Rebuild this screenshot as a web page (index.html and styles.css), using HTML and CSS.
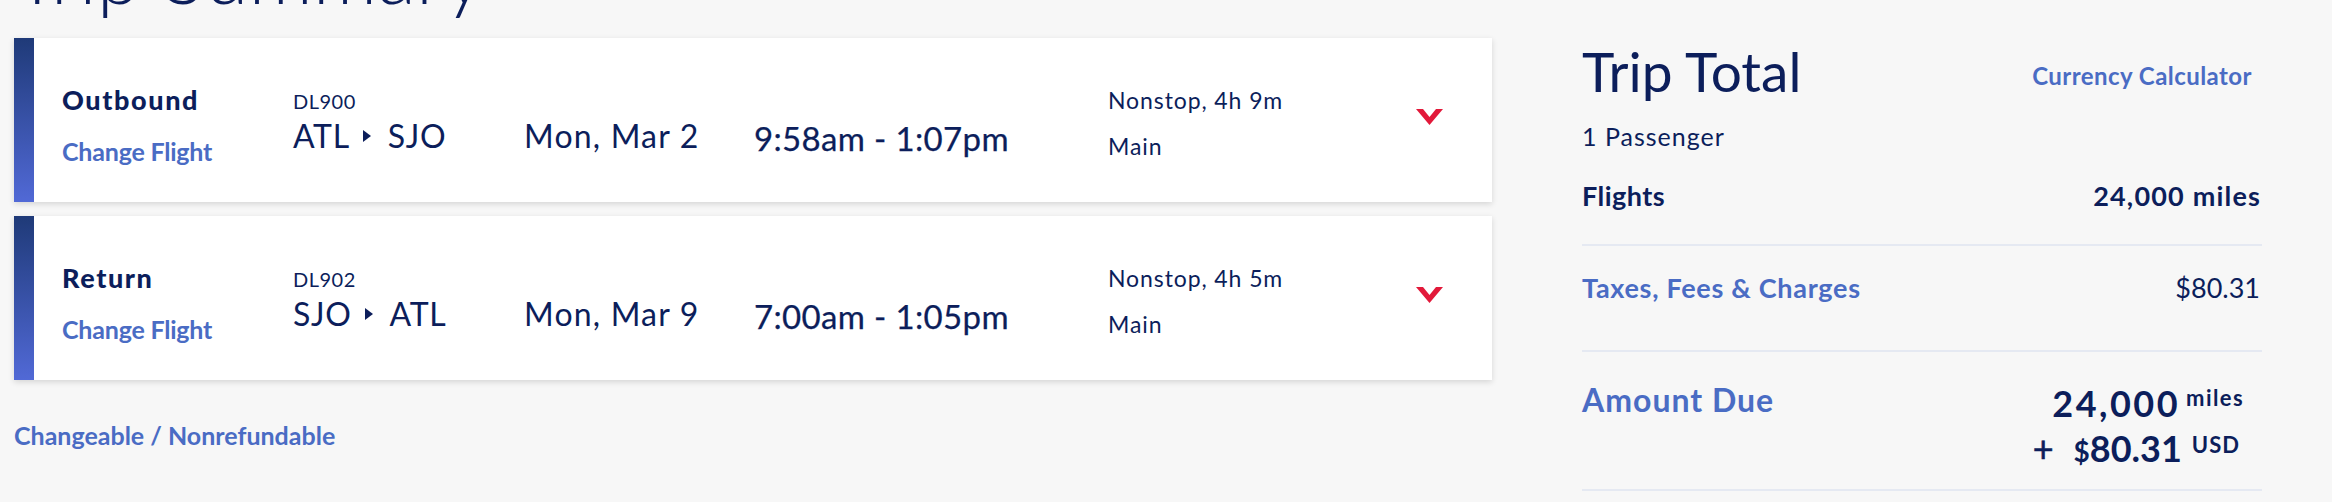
FILE: index.html
```html
<!DOCTYPE html>
<html lang="en">
<head>
<meta charset="utf-8">
<title>Trip Summary</title>
<link rel="stylesheet" href="styles.css">
</head>
<body>
<div class="page">
  <main class="trip">
    <h1 class="title">Trip Summary</h1>

    <section class="card">
      <div class="bar"></div>
      <div class="cols">
        <div class="label">
          <div class="dir">Outbound</div>
          <a class="change" href="#">Change Flight</a>
        </div>
        <div class="flight">
          <div class="fno">DL900</div>
          <div class="route"><span>ATL</span><span class="tri"></span><span>SJO</span></div>
        </div>
        <div class="date">Mon, Mar 2</div>
        <div class="time">9:58am - 1:07pm</div>
        <div class="info">
          <div>Nonstop, 4h 9m</div>
          <div>Main</div>
        </div>
        <div class="chev">
          <svg width="27" height="16" viewBox="0 0 27 16"><polygon points="0,0 7,0 13.5,8 20,0 27,0 13.5,16" fill="#e2193a"/></svg>
        </div>
      </div>
    </section>

    <section class="card">
      <div class="bar"></div>
      <div class="cols">
        <div class="label">
          <div class="dir">Return</div>
          <a class="change" href="#">Change Flight</a>
        </div>
        <div class="flight">
          <div class="fno">DL902</div>
          <div class="route"><span>SJO</span><span class="tri"></span><span>ATL</span></div>
        </div>
        <div class="date">Mon, Mar 9</div>
        <div class="time">7:00am - 1:05pm</div>
        <div class="info">
          <div>Nonstop, 4h 5m</div>
          <div>Main</div>
        </div>
        <div class="chev">
          <svg width="27" height="16" viewBox="0 0 27 16"><polygon points="0,0 7,0 13.5,8 20,0 27,0 13.5,16" fill="#e2193a"/></svg>
        </div>
      </div>
    </section>

    <a class="fare-link" href="#">Changeable / Nonrefundable</a>
  </main>

  <aside class="total">
    <div class="tt-head">
      <h2 class="tt-title">Trip Total</h2>
      <a class="calc" href="#">Currency Calculator</a>
    </div>
    <div class="pax">1 Passenger</div>
    <div class="row row-flights">
      <span>Flights</span>
      <span class="miles-val">24,000 miles</span>
    </div>
    <div class="row row-taxes">
      <a class="taxes" href="#">Taxes, Fees &amp; Charges</a>
      <span>$80.31</span>
    </div>
    <div class="row row-due">
      <div class="due-label">Amount Due</div>
      <div class="due-amt">
        <div class="amt-line"><span class="big-miles">24,000</span><span class="sup sup-miles">miles</span></div>
        <div class="amt-line"><span class="plus">+</span><span class="dollar">$</span><span>80.31</span><span class="sup sup-usd">USD</span></div>
      </div>
    </div>
  </aside>
</div>
</body>
</html>
```

FILE: styles.css
```css
* { box-sizing: border-box; margin: 0; padding: 0; }

html, body { height: 100%; }

body {
  background: #f7f7f7;
  font-family: Lato, "Open Sans", "Liberation Sans", sans-serif;
  color: #0c1e5b;
  overflow: hidden;
}

a { text-decoration: none; color: #4a6cc4; }

.page {
  display: flex;
  align-items: flex-start;
  gap: 90px;
  padding-left: 14px;
}

.trip { width: 1478px; flex: none; }

.title {
  font-size: 80px;
  line-height: 80px;
  font-weight: 300;
  margin-top: -67px;
  white-space: nowrap;
}

.card {
  display: flex;
  height: 164px;
  background: #fff;
  box-shadow: 0 2px 6px rgba(0, 0, 0, 0.14);
  margin-top: 25px;
}
.card + .card { margin-top: 14px; }

.bar {
  width: 20px;
  flex: none;
  background: linear-gradient(#1f3a78, #5169d6);
}

.cols {
  display: grid;
  grid-template-columns: 231px 231px 230px 354px 308px 27px;
  align-items: start;
  padding-left: 28px;
}

.label { padding-top: 47px; }
.dir { font-size: 27px; line-height: 30px; font-weight: 900; letter-spacing: 1.6px; }
.change {
  display: block;
  margin-top: 21px;
  font-size: 25px;
  line-height: 30px;
  font-weight: 700;
  letter-spacing: -0.2px;
  width: max-content;
}

.flight { padding-top: 51px; }
.fno { font-size: 20px; line-height: 24px; letter-spacing: 0.5px; }
.route {
  display: flex;
  align-items: center;
  margin-top: 4px;
  font-size: 32px;
  line-height: 38px;
  letter-spacing: 0.7px;
}
.tri {
  width: 0;
  height: 0;
  border-top: 6px solid transparent;
  border-bottom: 6px solid transparent;
  border-left: 8px solid #0c1e5b;
  margin: 0 17px 0 13px;
}

.date { padding-top: 79px; font-size: 32px; line-height: 38px; letter-spacing: 1.2px; }
.time {
  padding-top: 80px;
  font-size: 33px;
  line-height: 40px;
  letter-spacing: 0.35px;
  -webkit-text-stroke: 0.25px #0c1e5b;
}
.info { padding-top: 39px; font-size: 23px; line-height: 46px; letter-spacing: 0.9px; }
.chev { padding-top: 71px; }
.chev svg { display: block; }

.fare-link {
  display: block;
  width: max-content;
  margin-top: 40px;
  font-size: 25px;
  line-height: 30px;
  font-weight: 700;
}

.total { width: 680px; flex: none; padding-top: 39px; }

.tt-head { display: flex; justify-content: space-between; align-items: flex-start; }
.tt-title { font-size: 55px; line-height: 64px; font-weight: 400; }
.calc {
  margin-top: 22px;
  margin-right: 10px;
  font-size: 24px;
  line-height: 30px;
  font-weight: 700;
  letter-spacing: 0.45px;
}

.pax { margin-top: 18px; font-size: 25px; line-height: 30px; letter-spacing: 1px; }

.row {
  display: flex;
  justify-content: space-between;
  align-items: flex-start;
  border-bottom: 2px solid #e5e9f2;
  padding-right: 2px;
}

.row-flights {
  margin-top: 29px;
  padding-bottom: 32px;
  font-size: 27px;
  line-height: 32px;
  font-weight: 700;
  letter-spacing: 0.45px;
}
.miles-val { letter-spacing: 1.2px; margin-right: -1.2px; }

.row-taxes {
  padding-top: 26px;
  padding-bottom: 46px;
  font-size: 27px;
  line-height: 32px;
}
.taxes { font-weight: 700; letter-spacing: 0.7px; }

.row-due { padding-top: 29px; padding-bottom: 15px; padding-right: 18px; }
.due-label { font-size: 32px; line-height: 38px; font-weight: 700; color: #4a6cc4; letter-spacing: 1px; }

.due-amt { text-align: right; }
.amt-line { font-size: 36px; line-height: 45px; font-weight: 700; white-space: nowrap; }
.big-miles { letter-spacing: 2.5px; }
.sup { line-height: 20px; }
.sup-miles { font-size: 22px; vertical-align: 11px; letter-spacing: 1.4px; margin-left: 6px; }
.sup-usd { font-size: 22px; vertical-align: 9px; letter-spacing: 1px; margin-left: 10px; margin-right: 4px; }
.plus { font-weight: 400; -webkit-text-stroke: 0.6px #0c1e5b; margin-right: 20px; }
.dollar { font-size: 28px; }
```
